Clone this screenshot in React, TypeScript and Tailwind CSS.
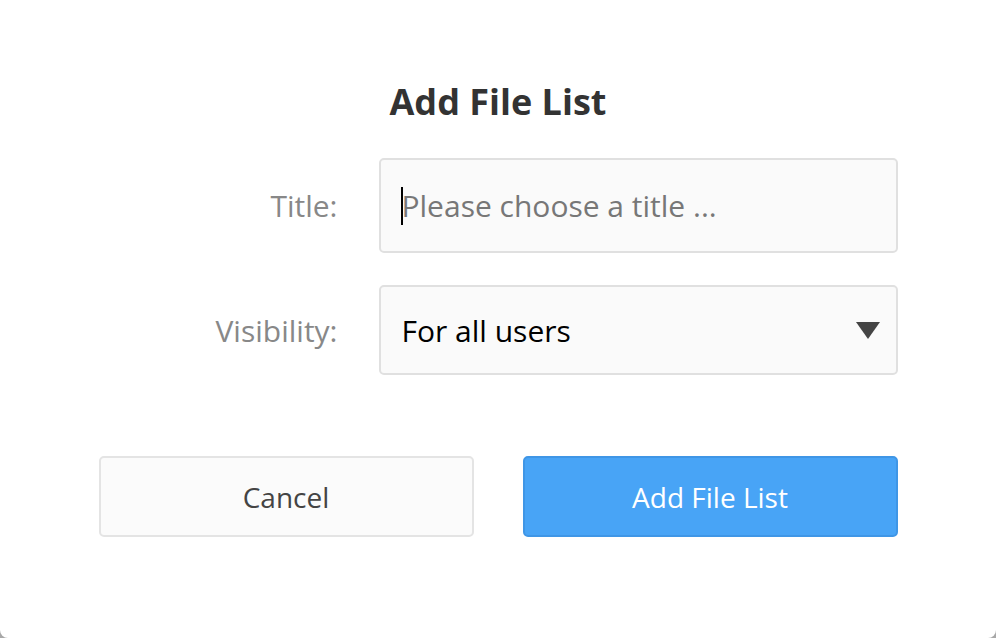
import React from "react";

export default function App() {
  return (
    <div className="w-[996px] h-[638px] bg-[#a8a8a8]">
      <div
        className="h-full bg-white rounded-b-[8px] flex flex-col items-center pt-[80px]"
        style={{ fontFamily: '"Open Sans", "Noto Sans", sans-serif' }}
      >
        <h1 className="text-[36px] leading-[44px] font-bold text-[#333]">Add File List</h1>

        <div className="mt-[34px] w-[799px] grid grid-cols-[239px_519px] gap-x-[41px] gap-y-[32px] items-center">
          <label className="text-right text-[30px] text-[#888]">Title:</label>
          <div className="relative h-[95px] rounded-[5px] border-2 border-[#e0e0e0] bg-[#fafafa] flex items-center px-[21px]">
            <span className="absolute left-[20px] top-[27px] w-[2px] h-[38px] bg-black" />
            <input
              placeholder="Please choose a title ..."
              className="w-full bg-transparent outline-none text-[30px] text-[#333] placeholder:text-[#777] caret-black"
            />
          </div>

          <label className="text-right text-[30px] text-[#888]">Visibility:</label>
          <div className="h-[90px] rounded-[5px] border-2 border-[#e0e0e0] bg-[#fafafa] flex items-center justify-between pl-[21px] pr-[16px]">
            <span className="text-[30px] text-black">For all users</span>
            <svg width="24" height="17" viewBox="0 0 24 17">
              <path d="M0 0 H24 L12 17 Z" fill="#444" />
            </svg>
          </div>
        </div>

        <div className="mt-[81px] w-[799px] flex justify-between">
          <button className="w-[375px] h-[81px] rounded-[5px] border-2 border-[#e4e4e4] bg-[#fbfbfb] text-[28px] text-[#444]">
            Cancel
          </button>
          <button className="w-[375px] h-[81px] rounded-[5px] border-2 border-[#3f96e6] bg-[#48a4f6] text-[28px] text-white">
            Add File List
          </button>
        </div>
      </div>
    </div>
  );
}
